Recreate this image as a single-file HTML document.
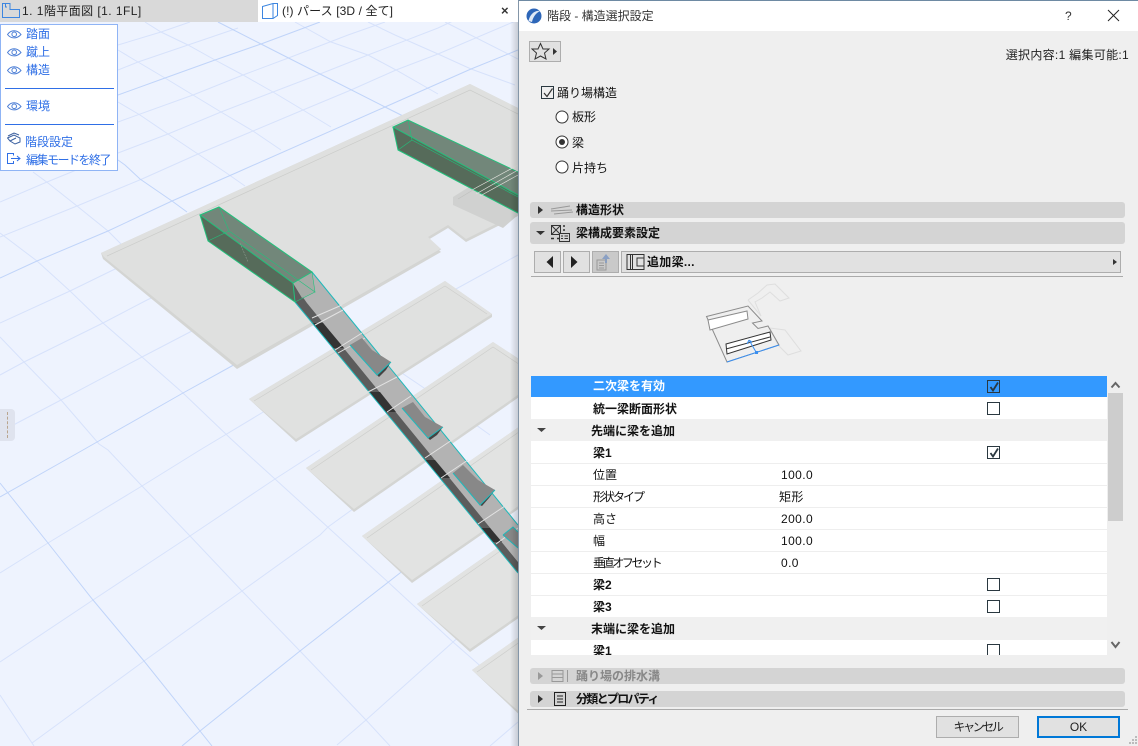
<!DOCTYPE html>
<html lang="ja"><head><meta charset="utf-8"><title>階段 - 構造選択設定</title>
<style>
html,body{margin:0;padding:0}
body{width:1138px;height:746px;position:relative;overflow:hidden;background:#eef3fe;font:12px/16px "Liberation Sans","Noto Sans CJK JP",sans-serif;color:#111}
div,span,svg{position:absolute;display:block}
.t{white-space:nowrap}
.b{font-weight:bold}
.blue{color:#2f6fe6}
.row{left:531px;width:576px;height:22px;background:#fff;box-shadow:inset 0 -1px 0 #eee}
.row .n{left:62px;top:0;line-height:23px;white-space:nowrap}
.row .v{left:250px;top:0;line-height:23px;white-space:nowrap;letter-spacing:.4px}
.row.g{background:#f0f0f0;box-shadow:none}
.cb{width:11px;height:11px;border:1.5px solid #2a3840;background:transparent}
.bar{left:530px;width:595px;background:#d4d4d4;border-radius:3px}
.btn{background:#e1e1e1;border:1px solid #adadad;box-sizing:border-box}
</style></head><body>

<svg style="left:0;top:0" width="518" height="746" viewBox="0 0 518 746">
<g fill="none" stroke="#d7e2fb" stroke-width="1">
<polyline points="0,237 77,206 142,179 198,154 253,131 303,110 351,90 396,70 438,54 518,20"/>
<polyline points="0,202 47,182 118,153 168,134 221,112 273,92 320,74 368,55 438,28 455,20"/>
<polyline points="0,168 118,122 193,95 243,75 291,57 348,35 385,22"/>
<polyline points="0,115 118,70 138,62 188,45 238,28"/>
<polyline points="118,45 161,32 190,22"/>
<polyline points="0,323 70,291 113,270 340,170"/>
<polyline points="0,375 24,362 103,323 147,300 200,275"/>
<polyline points="0,432 61,400 142,357 190,332 230,312"/>
<polyline points="0,573 48,543 142,486 200,450 300,390"/>
<polyline points="0,662 93,600 190,536 275,479 320,450"/>
<polyline points="32,743 144,661 242,591 320,535 328,527 400,475"/>
<polyline points="337,745 366,720 453,642 518,585"/>
<polyline points="490,746 518,722"/>
<polyline points="145,22 161,32 188,45 215,60 243,75 273,92 303,110 331,127"/>
<polyline points="118,50 138,62 165,78 193,95 221,112 253,131 281,150"/>
<polyline points="118,102 140,115 168,134 198,154 225,172 245,186"/>
<polyline points="33,172 48,183 77,206 108,231 122,245"/>
<polyline points="0,233 37,261 70,291 103,323 142,357 183,393 230,438 243,450 275,479 320,520 388,582 453,642 477,663 518,700"/>
<polyline points="0,337 24,362 61,400 99,444 108,450 142,486 190,536 242,591 300,651 366,720 390,746"/>
<polyline points="0,695 34,746"/>
<polyline points="368,22 395,35 438,54 471,69 515,85"/>
<polyline points="295,22 331,42 368,55 396,70 438,94"/>
<polyline points="445,22 518,59"/>
<polyline points="445,295 518,255"/>
<polyline points="390,365 430,392 490,435"/>
</g>
<g fill="none" stroke="#c0d4f9" stroke-width="1">
<polyline points="218,22 261,44 320,74 385,107 405,117"/>
<polyline points="118,95 165,78 215,60 261,44 320,22"/>
<polyline points="0,278 37,261 108,231 172,201 238,172 385,107 471,69 518,50"/>
<polyline points="118,160 125,165 140,179 172,201 187,212"/>
<polyline points="0,483 8,493 48,543 93,600 144,661 200,731 212,746"/>
<polyline points="0,497 83,450 183,393 230,367 260,350"/>
<polyline points="182,746 200,731 300,651 400,573 440,540"/>
<polyline points="490,410 518,395"/>
</g>

<!-- main slab -->
<polygon points="101,253 470,84 518,108 518,216 466,242 448,228 428,240 441,252 237,369 103,259" fill="#d4d5d3"/>
<polygon points="101,253 470,84 518,108 518,213 466,239 448,225 428,237 441,249 237,365 104,257" fill="#dfe0df"/>
<polyline points="107,256 470,90 518,114" fill="none" stroke="#cbccca" stroke-width=".7"/>
<polyline points="241,363 441,249" fill="none" stroke="#d3d4d2" stroke-width=".6"/>
<!-- stub landing -->
<polygon points="453,197 493,172 518,180 518,215 503,228 453,205" fill="#d0d1d0"/>
<polyline points="458,199 493,178 518,190" fill="none" stroke="#bfc0be" stroke-width=".6"/>

<!-- steps -->
<g>
<polygon points="249,399 445,281 492,314 492,317 296,442" fill="#d4d5d3"/>
<polygon points="249,399 445,281 492,314 296,439" fill="#e0e1e0"/>
<polyline points="254,401 445,286 487,314" fill="none" stroke="#cdcecc" stroke-width=".7"/>
<polygon points="306,468 493,342 545,376 545,379 354,512" fill="#d4d5d3"/>
<polygon points="306,468 493,342 545,376 354,509" fill="#e1e2e1"/>
<polyline points="311,470 493,347 540,378" fill="none" stroke="#cdcecc" stroke-width=".7"/>
<polygon points="362,536 549,406 599,453 412,583" fill="#d4d5d3"/>
<polygon points="362,536 549,406 599,450 412,580" fill="#e2e3e2"/>
<polyline points="367,538 549,411" fill="none" stroke="#cdcecc" stroke-width=".7"/>
<polygon points="417,604 617,464 670,512 470,652" fill="#d4d5d3"/>
<polygon points="417,604 617,464 670,509 470,649" fill="#e2e3e2"/>
<polyline points="422,606 617,469" fill="none" stroke="#cdcecc" stroke-width=".7"/>
<polygon points="472,670 672,530 725,580 525,720" fill="#d4d5d3"/>
<polygon points="472,670 672,530 725,577 525,717" fill="#e2e3e2"/>
<polyline points="477,672 672,535" fill="none" stroke="#cdcecc" stroke-width=".7"/>
</g>

<!-- upper beam -->
<polygon points="393,127 408,120 518,172 518,195" fill="#72877a"/>
<polygon points="393,127 398,150 518,213 518,195" fill="#566b5a"/>
<g fill="none" stroke="#21c27c" stroke-width="1">
<polyline points="518,172 408,120 393,127 518,195"/>
<polyline points="393,127 398,150 518,213"/>
<polyline points="408,120 412,140 398,150" stroke-width=".6"/>
<polyline points="412,140 518,197" stroke-width=".6"/>
</g>
<g fill="none" stroke="#e5e5e0" stroke-width=".7">
<polyline points="472,190 518,165"/><polyline points="476,194 518,170"/><polyline points="480,196 518,175"/>
</g>

<!-- stringer -->
<polygon points="293,283 312,272 518,525 518,562 307,303" fill="#b3b3b3"/>
<polygon points="295,302 293,283 307,303 518,562 518,573" fill="#5c5c5c"/>
<polygon points="312,323 323,323 344,348 333,348" fill="#333"/>
<polygon points="369,392 380,392 396,412 386,412" fill="#333"/>
<polygon points="425,460 435,460 450,478 440,478" fill="#333"/>
<polygon points="481,528 490,528 502,542 493,542" fill="#333"/>
<g fill="none" stroke="#1fb9bb" stroke-width="1">
<line x1="312" y1="272" x2="518" y2="525"/>
<line x1="295" y1="302" x2="518" y2="573"/>
</g>
<g fill="none" stroke="#e2e2e2" stroke-width="1">
<line x1="312" y1="318" x2="342" y2="305"/><line x1="315" y1="325" x2="343" y2="310"/>
<line x1="335" y1="350" x2="362" y2="333"/><line x1="338" y1="353" x2="365" y2="338"/>
<line x1="368" y1="392" x2="397" y2="377"/><line x1="387" y1="412" x2="411" y2="396"/>
<line x1="425" y1="458" x2="452" y2="440"/><line x1="441" y1="478" x2="468" y2="460"/>
<line x1="478" y1="524" x2="505" y2="506"/><line x1="496" y1="544" x2="518" y2="528"/>
</g>
<!-- secondary beams -->
<polygon points="350,345 362,338 372,350 391,362 377,375" fill="#888"/>
<polygon points="377,375 391,362 386,370 379,377" fill="#444"/>
<polygon points="402,408 413,402 425,417 443,427 428,438" fill="#888"/>
<polygon points="428,438 443,427 437,435 430,440" fill="#444"/>
<polygon points="453,473 463,465 478,480 495,490 480,505" fill="#888"/>
<polygon points="480,505 495,490 489,498 482,506" fill="#444"/>
<polygon points="503,535 513,527 518,532 518,548" fill="#888"/>
<g fill="none" stroke="#1fb9bb" stroke-width="1">
<polyline points="350,345 377,375 391,362"/>
<polyline points="402,408 428,438 443,427"/>
<polyline points="453,473 480,505 495,490"/>
<polyline points="503,535 518,548"/>
<polyline points="503,535 513,527 518,532"/>
</g>

<!-- lower beam -->
<polygon points="200,215 219,207 312,272 293,283" fill="#72877a"/>
<polygon points="200,215 208,241 295,302 293,283" fill="#566b5a"/>
<polygon points="293,283 312,272 315,292 302,298" fill="#a5aba6"/>
<g fill="none" stroke="#21c27c" stroke-width="1">
<polygon points="200,215 219,207 312,272 293,283"/>
<polyline points="200,215 208,241 295,302 293,283"/>
<polyline points="219,207 229,231 208,241" stroke-width=".6"/>
<polyline points="229,231 315,292 312,272" stroke-width=".6"/>
<polyline points="315,292 295,302" stroke-width=".6"/>
</g>
<line x1="240" y1="243" x2="248" y2="262" stroke="#8b9a8e" stroke-width=".6" stroke-dasharray="2 1"/>
<defs><linearGradient id="sh" x1="0" x2="1" y1="0" y2="0"><stop offset="0" stop-color="#000" stop-opacity="0"/><stop offset="1" stop-color="#000" stop-opacity=".16"/></linearGradient></defs>
<rect x="510" y="22" width="8" height="724" fill="url(#sh)"/>
</svg>

<!-- tabs -->
<div style="left:0;top:0;width:258px;height:22px;background:#d9d9d9"></div>
<div style="left:258px;top:0;width:260px;height:22px;background:#fff"></div>
<svg style="left:2px;top:3px" width="18" height="15" viewBox="0 0 18 15"><path d="M.5.5H8V6.500H17.500V14.500H.5ZM3.500.5V4H5" fill="none" stroke="#3d86e0"/></svg>
<div class="t" style="left:22px;top:3px;color:#222;letter-spacing:.45px">1. 1階平面図 [1. 1FL]</div>
<svg style="left:262px;top:3px" width="17" height="16" viewBox="0 0 17 16"><path d="M.5 3.500 11 .5H15.500V12.500L11 15.500H.5ZM11 .5V15.500" fill="none" stroke="#3d86e0"/></svg>
<div class="t" style="left:282px;top:3px;color:#222;letter-spacing:.1px">(!) パース [3D / 全て]</div>
<div class="t b" style="left:501px;top:3px;font-size:13px;color:#333">×</div>

<!-- view panel -->
<div style="left:0;top:24px;width:116px;height:145px;background:#fff;border:1px solid #8fb4f5"></div>
<div style="left:5px;top:88px;width:109px;height:1px;background:#2f6fe6"></div>
<div style="left:5px;top:124px;width:109px;height:1px;background:#2f6fe6"></div>
<svg style="left:7px;top:29px" width="15" height="120" viewBox="0 0 15 120" fill="none" stroke="#4d7fd6">
<g><path d="M.5 5.500C4 .5 10 .5 14 5.500 10 10 4 10 .5 5.500Z"/><circle cx="7.200" cy="5.300" r="2.300"/></g>
<g transform="translate(0,18)"><path d="M.5 5.500C4 .5 10 .5 14 5.500 10 10 4 10 .5 5.500Z"/><circle cx="7.200" cy="5.300" r="2.300"/></g>
<g transform="translate(0,36)"><path d="M.5 5.500C4 .5 10 .5 14 5.500 10 10 4 10 .5 5.500Z"/><circle cx="7.200" cy="5.300" r="2.300"/></g>
<g transform="translate(0,72)"><path d="M.5 5.500C4 .5 10 .5 14 5.500 10 10 4 10 .5 5.500Z"/><circle cx="7.200" cy="5.300" r="2.300"/></g>
<path d="M.5 109 7 106 13 109 13 113 8 115 3 112ZM3 112 9 109M1 107 7 104 12 106" stroke="#3a5f9f"/>
</svg>
<svg style="left:7px;top:153px" width="15" height="13" viewBox="0 0 15 13" fill="none" stroke="#2f6fe6"><path d="M6.500 2.500V.5H.5V10.500H6.500V8M4 5.500H13M10 3 13 5.500 10 8"/></svg>
<div class="t blue" style="left:26px;top:26px">踏面</div>
<div class="t blue" style="left:26px;top:44px">蹴上</div>
<div class="t blue" style="left:26px;top:62px">構造</div>
<div class="t blue" style="left:26px;top:98px">環境</div>
<div class="t blue" style="left:25px;top:134px">階段設定</div>
<div class="t blue" style="left:26px;top:152px;letter-spacing:-1.5px">編集モードを終了</div>

<!-- left handle -->
<div style="left:0;top:409px;width:15px;height:32px;background:#dfe3ee;border-radius:0 4px 4px 0"></div>
<div style="left:7px;top:412px;width:0;height:26px;border-left:1px dashed #b9a58e"></div>

<!-- dialog -->
<div style="left:518px;top:0;width:620px;height:746px;background:#efefef;border-left:1px solid #8496a8;border-top:1px solid #6e8aa3;box-sizing:border-box"></div>
<div style="left:519px;top:1px;width:619px;height:30px;background:#fff"></div>
<svg style="left:526px;top:8px" width="16" height="16" viewBox="0 0 16 16"><circle cx="8" cy="8" r="7.500" fill="#2d66b8"/><path d="M2.500 13C4 6 9 2 14 3 10 5 7 9 6 14Z" fill="#dfe9f6"/></svg>
<div class="t" style="left:547px;top:8px;color:#333">階段 - 構造選択設定</div>
<div class="t" style="left:1065px;top:8px;color:#333">?</div>
<svg style="left:1107px;top:9px" width="13" height="13" viewBox="0 0 13 13"><path d="M1 1 12 12M12 1 1 12" stroke="#222" fill="none"/></svg>

<div class="btn" style="left:529px;top:41px;width:32px;height:21px;background:#e1e1e1"></div>
<svg style="left:531px;top:42px" width="28" height="19" viewBox="0 0 28 19"><path d="M9.500 1.500 12 7H18L13.500 11 15 17 9.500 14 4 17 5.500 11 1 7H7Z" fill="none" stroke="#333"/><path d="M22 6 26 9.500 22 13Z" fill="#333"/></svg>
<div class="t" style="right:9px;top:47px;color:#222;letter-spacing:.3px">選択内容:1 編集可能:1</div>

<div class="cb" style="left:541px;top:86px"></div>
<svg style="left:542px;top:87px" width="12" height="12" viewBox="0 0 12 12"><path d="M2 6 5 9.500 10.500 1.500" fill="none" stroke="#333" stroke-width="1.200"/></svg>
<div class="t" style="left:557px;top:85px">踊り場構造</div>
<svg style="left:555px;top:110px" width="15" height="65" viewBox="0 0 15 65" fill="#fff" stroke="#333"><circle cx="7" cy="7" r="6"/><circle cx="7" cy="32" r="6"/><circle cx="7" cy="32" r="3" fill="#333" stroke="none"/><circle cx="7" cy="57" r="6"/></svg>
<div class="t" style="left:572px;top:109px">板形</div>
<div class="t" style="left:572px;top:135px">梁</div>
<div class="t" style="left:572px;top:160px">片持ち</div>

<!-- section bars -->
<div class="bar" style="top:202px;height:16px"></div>
<div class="bar" style="top:222px;height:22px"></div>
<svg style="left:530px;top:202px" width="50" height="42" viewBox="0 0 50 42"><path d="M8 4 13 8 8 12Z" fill="#333"/><path d="M21 7 40 4M21 9 42 8M24 12 43 10" stroke="#999" fill="none"/><path d="M6 29 15 29 10.500 33Z" fill="#333"/></svg>
<svg style="left:550px;top:223px" width="21" height="20" viewBox="0 0 21 20" fill="none" stroke="#333"><rect x="1.500" y="2.500" width="9" height="9"/><path d="M1.500 2.500 10.500 11.500M10.500 2.500 1.500 11.500"/><path d="M13 3H15M13 7H15M1 15.500H4M7 15.500H10" stroke-width="1.500"/><rect x="9.500" y="10.500" width="10" height="8" fill="#d4d4d4"/><path d="M11 13H13M14.500 13H18M11 15.500H13M14.500 15.500H18"/></svg>
<div class="t b" style="left:576px;top:202px">構造形状</div>
<div class="t b" style="left:576px;top:225px">梁構成要素設定</div>

<!-- toolbar -->
<div class="btn" style="left:534px;top:251px;width:27px;height:22px"></div>
<div class="btn" style="left:563px;top:251px;width:27px;height:22px"></div>
<div class="btn" style="left:592px;top:251px;width:27px;height:22px;background:#c9c9c9"></div>
<div class="btn" style="left:621px;top:251px;width:500px;height:22px"></div>
<svg style="left:534px;top:251px" width="590" height="22" viewBox="0 0 590 22">
<path d="M19 5 12.500 11 19 17Z" fill="#222"/><path d="M37 5 43.500 11 37 17Z" fill="#222"/>
<g fill="none" stroke="#999"><path d="M63 9V19H72V9ZM65 12H70M65 14.500H70M65 17H70"/><path d="M72 12V6" stroke="#8a9fc0" stroke-width="2"/></g><path d="M72 3 76 8H68Z" fill="#8aa0c4"/>
<g fill="none" stroke="#333"><path d="M93 3.500H110V18.500H93ZM96.500 3.500V18.500M98.500 3.500V18.500"/><path d="M110 7H103V15H110"/></g>
<path d="M579 8 583 11 579 14Z" fill="#333"/>
</svg>
<div class="t b" style="left:647px;top:254px;letter-spacing:.3px">追加梁...</div>
<div style="left:531px;top:276px;width:592px;height:1px;background:#aaa"></div>

<!-- preview -->
<svg style="left:690px;top:280px" width="130" height="90" viewBox="690 280 130 90" fill="none">
<g stroke="#dedede"><path d="M748 300 758 293 767 285 775 284 789 298 780 301 770 292 762 298 755 302 761 316 748 300"/><path d="M770 328 785 330 801 351 788 355 778 345 770 328"/></g>
<path d="M706.500 316.500 748 306 762 321 752.500 323 758 328.500 768 326 779 345 727 362Z" stroke="#8b8b8b"/>
<path d="M708 320 747 311 748 319 710 330Z" stroke="#8b8b8b" fill="#fff"/>
<path d="M726 344 770 332 771 340 727 354Z" stroke="#333" fill="#fff"/><path d="M726 349 770 337" stroke="#333"/>
<path d="M727 362 779 345" stroke="#3a8ff0"/><path d="M756 352 749 340M749 340 747 344M749 340 752 342" stroke="#3a8ff0"/><rect x="755" y="351" width="3" height="3" fill="#3a8ff0"/>
</svg>

<!-- list -->
<div class="row" style="top:376px;height:21px;background:#3399ff;box-shadow:none"><span class="n b" style="color:#fff;line-height:21px">二次梁を有効</span></div>
<div class="row" style="top:397px;height:22px;box-shadow:none"><span class="n b" style="line-height:24px">統一梁断面形状</span></div>
<div class="row g" style="top:419px"><span class="n b" style="left:60px;line-height:24px">先端に梁を追加</span></div>
<div class="row" style="top:441px;height:23px"><span class="n b" style="line-height:24px">梁1</span></div>
<div class="row" style="top:464px"><span class="n">位置</span><span class="v">100.0</span></div>
<div class="row" style="top:486px"><span class="n" style="letter-spacing:-2px">形状タイプ</span><span class="v" style="left:248px">矩形</span></div>
<div class="row" style="top:508px"><span class="n">高さ</span><span class="v">200.0</span></div>
<div class="row" style="top:530px"><span class="n">幅</span><span class="v">100.0</span></div>
<div class="row" style="top:552px"><span class="n" style="letter-spacing:-2.4px">垂直オフセット</span><span class="v">0.0</span></div>
<div class="row" style="top:574px"><span class="n b">梁2</span></div>
<div class="row" style="top:596px;height:21px;box-shadow:none"><span class="n b">梁3</span></div>
<div class="row g" style="top:617px;height:23px"><span class="n b" style="left:60px;line-height:24px">末端に梁を追加</span></div>
<div class="row" style="top:640px;height:15px;box-shadow:none;overflow:hidden"><span class="n b">梁1</span></div>
<svg style="left:536px;top:425px" width="12" height="210" viewBox="0 0 12 210"><path d="M1 3H10L5.500 7Z" fill="#444"/><path d="M1 201H10L5.500 205Z" fill="#444"/></svg>

<div class="cb" style="left:987px;top:380px"></div>
<div class="cb" style="left:987px;top:402px"></div>
<div class="cb" style="left:987px;top:446px"></div>
<div class="cb" style="left:987px;top:578px"></div>
<div class="cb" style="left:987px;top:600px"></div>
<div style="left:987px;top:644px;width:14px;height:11px;overflow:hidden"><div class="cb" style="left:0;top:0"></div></div>
<svg style="left:988px;top:381px" width="12" height="80" viewBox="0 0 12 80" fill="none" stroke="#2a3840" stroke-width="1.800"><path d="M2.500 6 5 9.500 10 1.500"/><path d="M2.500 72 5 75.500 10 67.500"/></svg>

<!-- scrollbar -->
<div style="left:1108px;top:393px;width:15px;height:128px;background:#cdcdcd"></div>
<svg style="left:1110px;top:380px" width="11" height="270" viewBox="0 0 11 270" fill="none" stroke="#666" stroke-width="2"><path d="M1.500 7.500 5.500 3 9.500 7.500"/><path d="M1.500 262 5.500 267 9.500 262"/></svg>

<!-- lower bars -->
<div class="bar" style="top:668px;height:16px"></div>
<div class="bar" style="top:691px;height:16px"></div>
<svg style="left:530px;top:668px" width="45" height="40" viewBox="0 0 45 40" fill="none"><path d="M8 4 13 8 8 12Z" fill="#999"/><path d="M22 2.500H33V13.500H22ZM22 6H33M22 9.500H33M37.500 2V14" stroke="#999"/><path d="M8 27 13 31 8 35Z" fill="#333"/><path d="M24.500 24.500H35.500V37.500H24.500ZM27 28H33M27 31H33M27 34H33" stroke="#222"/></svg>
<div class="t b" style="left:576px;top:668px;color:#888">踊り場の排水溝</div>
<div class="t b" style="left:576px;top:691px;letter-spacing:-1.7px">分類とプロパティ</div>
<div style="left:527px;top:709px;width:601px;height:1px;background:#aaa"></div>

<!-- buttons -->
<div class="btn t" style="left:936px;top:716px;width:83px;height:22px;text-align:center;line-height:20px;color:#222;letter-spacing:-2.4px">キャンセル</div>
<div class="btn t" style="left:1037px;top:716px;width:83px;height:22px;text-align:center;line-height:18px;border:2px solid #0078d7;color:#222">OK</div>
<svg style="left:1128px;top:735px" width="10" height="10" viewBox="0 0 10 10" fill="#bbb"><rect x="7" y="1" width="2" height="2"/><rect x="4" y="4" width="2" height="2"/><rect x="7" y="4" width="2" height="2"/><rect x="1" y="7" width="2" height="2"/><rect x="4" y="7" width="2" height="2"/><rect x="7" y="7" width="2" height="2"/></svg>
</body></html>
